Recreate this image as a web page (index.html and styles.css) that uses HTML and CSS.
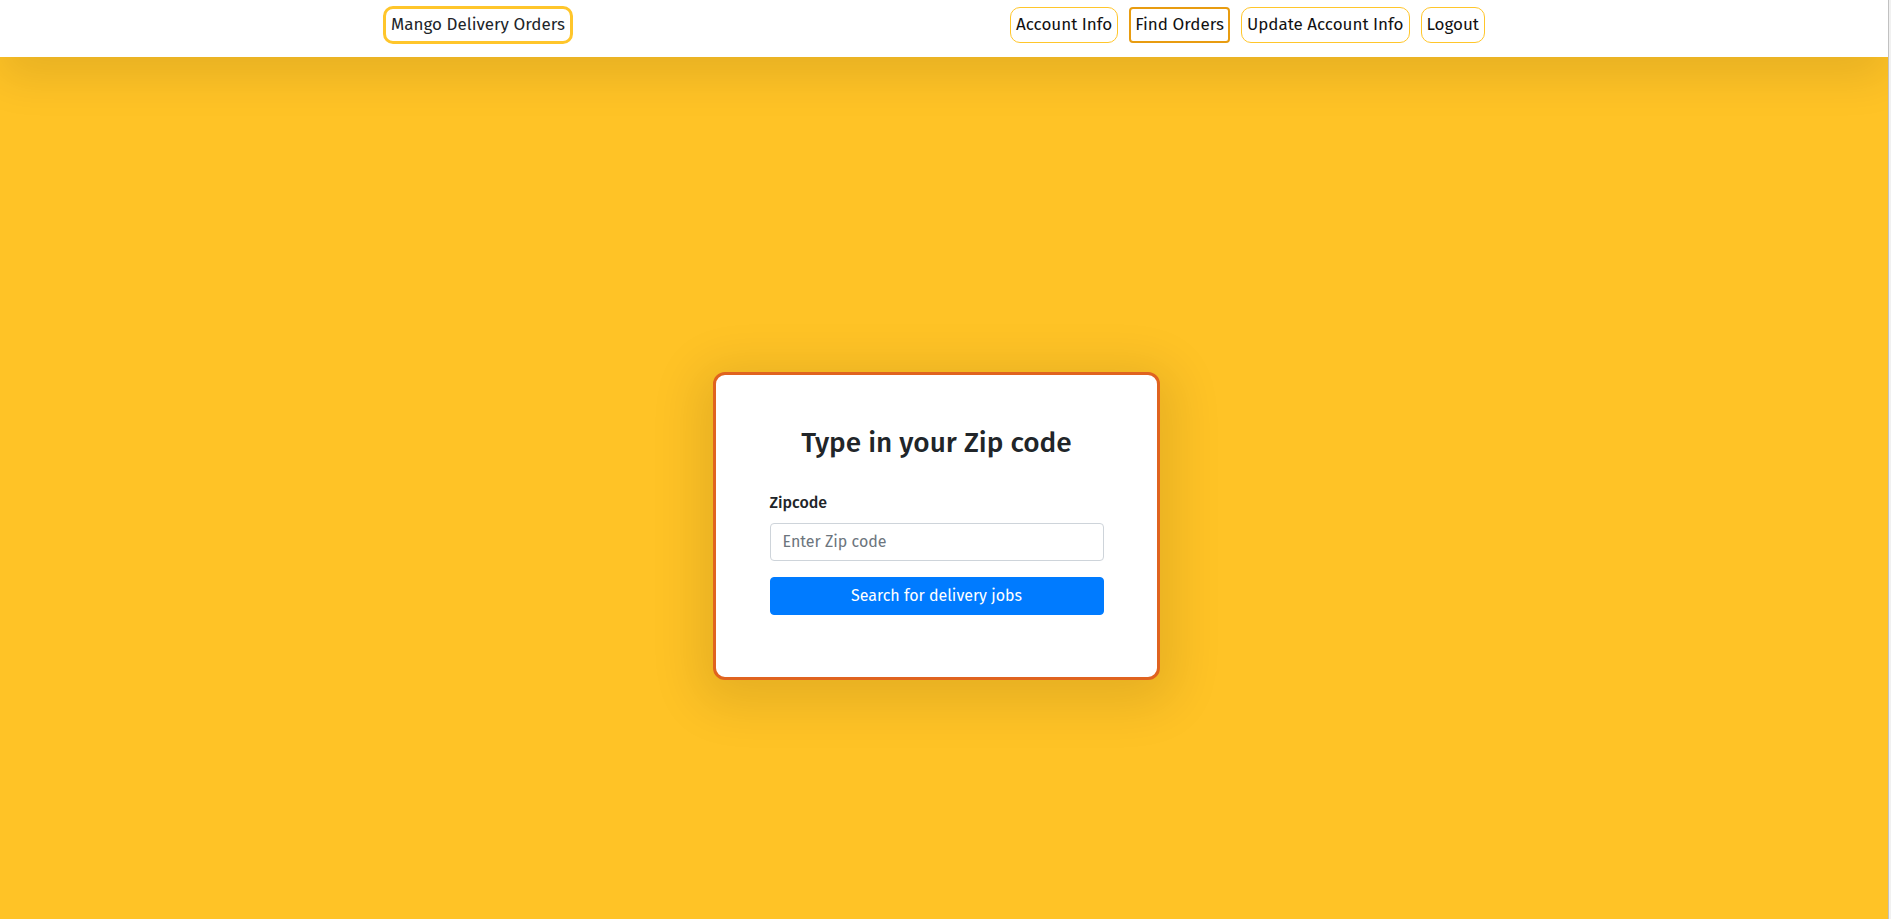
FILE: index.html
```html
<!DOCTYPE html>
<html lang="en">
<head>
<meta charset="utf-8">
<title>Mango Delivery Orders</title>
<link rel="stylesheet" href="styles.css">
</head>
<body>
<header class="navbar">
  <div class="nav-inner">
    <a class="brand" href="#">Mango Delivery Orders</a>
    <nav class="nav-links">
      <a class="nav-btn" href="#">Account Info</a>
      <a class="nav-btn active" href="#">Find Orders</a>
      <a class="nav-btn" href="#">Update Account Info</a>
      <a class="nav-btn" href="#">Logout</a>
    </nav>
  </div>
</header>
<main class="main">
  <section class="card">
    <h3 class="card-title">Type in your Zip code</h3>
    <form class="zip-form">
      <label class="form-label" for="zip">Zipcode</label>
      <input class="form-control" id="zip" type="text" placeholder="Enter Zip code">
      <button class="btn-primary" type="button">Search for delivery jobs</button>
    </form>
  </section>
</main>
<div class="scrollbar"></div>
</body>
</html>
```
FILE: styles.css
```css
* { box-sizing: border-box; }
html, body { margin: 0; padding: 0; }
body {
  font-family: "Fira Sans", "Noto Sans", sans-serif;
  font-size: 16px;
  line-height: 1.5;
  color: #212529;
  background: #ffc326;
  min-height: 919px;
  width: 1888px;
  overflow: hidden;
}
.navbar {
  position: relative;
  z-index: 2;
  height: 57px;
  background: #ffffff;
  box-shadow: 0 20px 45px rgba(0, 0, 0, 0.1);
  padding-top: 6px;
}
.nav-inner {
  width: 1102px;
  margin-left: 383px;
  display: flex;
  align-items: center;
  justify-content: space-between;
}
.brand {
  display: block;
  padding: 4px 5px;
  border: 3px solid #ffc62b;
  border-radius: 10px;
  color: #212529;
  font-size: 17px;
  line-height: 24px;
  text-decoration: none;
  white-space: nowrap;
}
.nav-links {
  display: flex;
  gap: 11px;
}
.nav-btn {
  display: block;
  padding: 5px 5px;
  border: 1px solid #ffc62b;
  border-radius: 10px;
  color: #111;
  font-size: 17px;
  line-height: 24px;
  text-decoration: none;
  white-space: nowrap;
}
.nav-btn.active {
  padding: 4px 4px;
  border: 2px solid #e89c10;
  border-radius: 4px;
}
.main {
  display: flex;
  justify-content: center;
  padding: 315px 15px 0 0;
}
.card {
  width: 447px;
  background: #ffffff;
  border: 3px solid #e0631f;
  border-radius: 12px;
  padding: 51px 0 62px;
  box-shadow: 0 10px 50px 15px rgba(0, 0, 0, 0.1);
}
.card-title {
  margin: 0 0 31px;
  text-align: center;
  font-size: 28px;
  font-weight: 500;
  line-height: 1.2;
  color: #212529;
}
.zip-form {
  width: 334px;
  margin: 0 auto;
  display: flex;
  flex-direction: column;
}
.form-label {
  font-weight: 500;
  margin-bottom: 8px;
}
.form-control {
  height: 38px;
  padding: 6px 12px;
  font: inherit;
  color: #495057;
  border: 1px solid #ced4da;
  border-radius: 4px;
  background: #fff;
  margin-bottom: 16px;
}
.form-control::placeholder { color: #6c757d; }
.btn-primary {
  height: 38px;
  font: inherit;
  color: #fff;
  background: #007bff;
  border: 1px solid #007bff;
  border-radius: 4px;
  cursor: pointer;
}
.scrollbar {
  position: fixed;
  top: 0;
  right: 0;
  width: 3px;
  height: 919px;
  background: #f1f1f1;
  border-left: 1px solid #c1c1c1;
}
```
